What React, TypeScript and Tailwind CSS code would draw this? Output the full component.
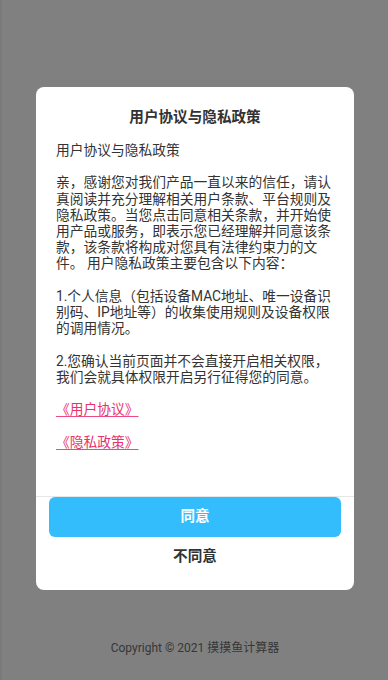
const font = { fontFamily: 'Roboto, "Noto Sans CJK SC", sans-serif' };

function PolicyLink({ label }: { label: string }) {
    return (
        <div>
            <span className="cursor-pointer text-[#e8326e] underline decoration-[#ea4a80] decoration-1 underline-offset-[2px]">
                {label}
            </span>
        </div>
    );
}

function PrivacyDialog() {
    return (
        <div className="mt-[87px] flex w-[318px] flex-col rounded-[8px] bg-white">
            <div className="pt-[20px] text-center text-[14.6px] font-bold leading-[20px] text-[#333]">
                用户协议与隐私政策
            </div>
            <div className="flex h-[369px] flex-col gap-[16.2px] overflow-hidden px-[20px] pt-[15px] text-[13.75px] leading-[16.2px] text-[#333]">
                <div>用户协议与隐私政策</div>
                <div>
                    亲，感谢您对我们产品一直以来的信任，请认真阅读并充分理解相关用户条款、平台规则及隐私政策。当您点击同意相关条款，并开始使用产品或服务，即表示您已经理解并同意该条款，该条款将构成对您具有法律约束力的文件。 用户隐私政策主要包含以下内容：
                </div>
                <div>1.个人信息（包括设备MAC地址、唯一设备识别码、IP地址等）的收集使用规则及设备权限的调用情况。</div>
                <div>2.您确认当前页面并不会直接开启相关权限，我们会就具体权限开启另行征得您的同意。</div>
                <PolicyLink label="《用户协议》" />
                <PolicyLink label="《隐私政策》" />
            </div>
            <div className="border-t border-[#e6e6e6] px-[13px] pb-[13px]">
                <button className="flex h-[40px] w-full items-center justify-center rounded-[6px] bg-[#33bdfd] text-[14.6px] font-bold text-white">
                    同意
                </button>
                <button className="flex h-[40px] w-full items-center justify-center text-[14.6px] font-bold text-[#333]">
                    不同意
                </button>
            </div>
        </div>
    );
}

export default function App() {
    return (
        <div className="flex min-h-[680px] w-full bg-[#808080]" style={font}>
            <div className="w-[2px] bg-[#7a7a7a]" />
            <div className="flex flex-1 flex-col items-center">
                <PrivacyDialog />
                <div className="mt-[50px] text-[12px] leading-[16px] text-[#363636]">
                    Copyright © 2021 摸摸鱼计算器
                </div>
            </div>
        </div>
    );
}
